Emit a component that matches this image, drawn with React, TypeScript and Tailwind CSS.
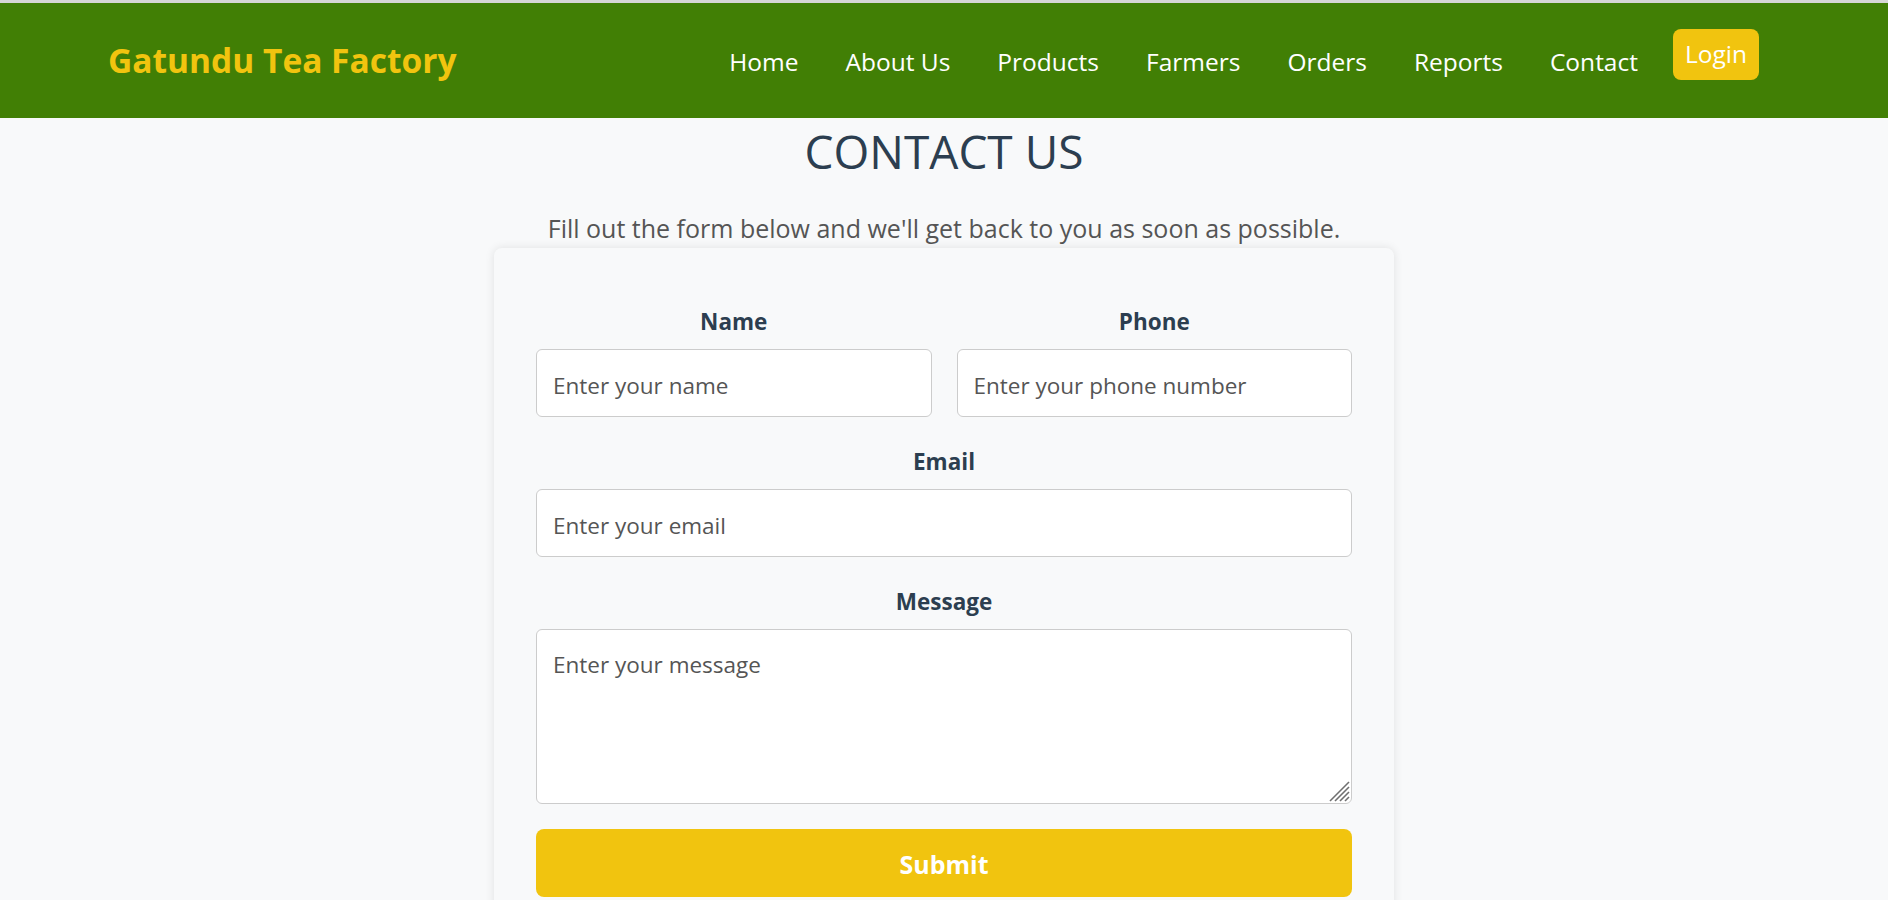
import React from "react";

const links = ["Home", "About Us", "Products", "Farmers", "Orders", "Reports", "Contact"];

const inputCls =
  "h-[68px] px-[16px] pt-[4px] bg-white border border-[#ccc] rounded-[6px] text-[22.5px] text-[#333] placeholder:text-[#555] outline-none";
const labelCls = "text-center text-[22.5px] leading-[29px] font-bold text-[#2c3e50] mb-[13px]";

export default function App() {
  return (
    <div className="min-h-screen bg-[#f8f9fa]" style={{ fontFamily: '"Open Sans", "Noto Sans", sans-serif' }}>
      <div className="h-[3px] bg-[#d6d6d6]" />
      <nav className="h-[115px] bg-[#417f05] flex items-center justify-between pl-[108px] pr-[129px]">
        <div className="text-[33.5px] font-bold text-[#f1c40f] leading-none">Gatundu Tea Factory</div>
        <ul className="flex items-center gap-[47px]">
          {links.map((l) => (
            <li key={l} className="text-[24.5px] text-white leading-[32px] mt-[2px]">
              {l}
            </li>
          ))}
          <li className="-ml-[12px] mb-[13px]">
            <button className="h-[51px] px-[12px] rounded-[8px] bg-[#f1c40f] text-white text-[24.5px] leading-none flex items-center">
              Login
            </button>
          </li>
        </ul>
      </nav>
      <main className="flex flex-col items-center">
        <h1 className="mt-[6px] text-[46px] leading-[55px] text-[#2c3e50] font-normal">CONTACT US</h1>
        <p className="mt-[33px] text-[25px] leading-[32px] text-[#555]">
          Fill out the form below and we'll get back to you as soon as possible.
        </p>
        <form className="mt-[4px] w-[900px] rounded-[8px] bg-[#f8f9fa] shadow-[0_0_10px_rgba(0,0,0,0.1)] px-[42px] pt-[59px] pb-[40px]">
          <div className="grid grid-cols-2 gap-[25px]">
            <div className="flex flex-col">
              <label className={labelCls}>Name</label>
              <input className={inputCls} placeholder="Enter your name" />
            </div>
            <div className="flex flex-col">
              <label className={labelCls}>Phone</label>
              <input className={inputCls} placeholder="Enter your phone number" />
            </div>
          </div>
          <div className="flex flex-col mt-[30px]">
            <label className={labelCls}>Email</label>
            <input className={inputCls} placeholder="Enter your email" />
          </div>
          <div className="flex flex-col mt-[30px]">
            <label className={labelCls}>Message</label>
            <div className="relative">
              <textarea
                className="block w-full h-[175px] px-[16px] pt-[20px] bg-white border border-[#ccc] rounded-[6px] text-[22.5px] leading-[29px] text-[#333] placeholder:text-[#555] outline-none resize-none"
                placeholder="Enter your message"
              />
              <svg
                className="absolute right-[2px] bottom-[2px]"
                width="22"
                height="22"
                viewBox="0 0 22 22"
                fill="none"
                stroke="#707070"
                strokeWidth="1.6"
              >
                <line x1="21" y1="2" x2="2" y2="21" />
                <line x1="21" y1="7" x2="7" y2="21" />
                <line x1="21" y1="12" x2="12" y2="21" />
                <line x1="21" y1="17" x2="17" y2="21" />
              </svg>
            </div>
          </div>
          <button
            type="button"
            className="mt-[25px] w-full h-[68px] pt-[4px] rounded-[8px] bg-[#f1c40f] text-white text-[25px] font-bold"
          >
            Submit
          </button>
        </form>
      </main>
    </div>
  );
}
